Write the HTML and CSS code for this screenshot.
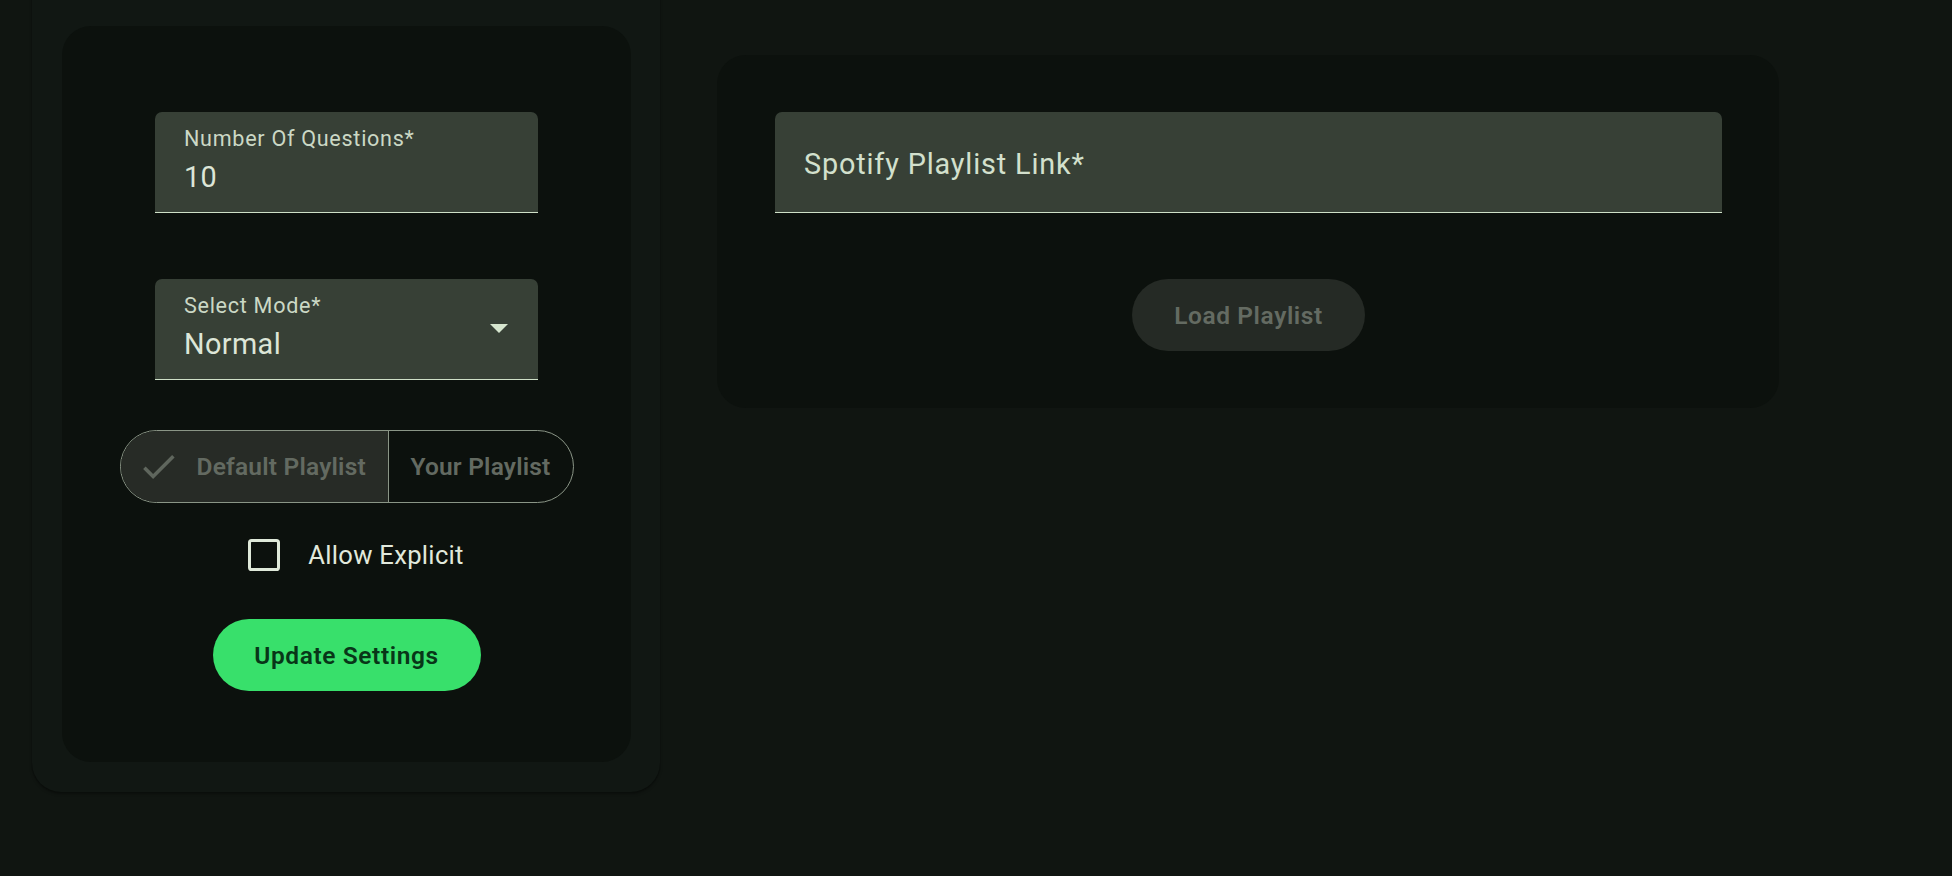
FILE: index.html
```html
<!DOCTYPE html>
<html lang="en">
<head>
<meta charset="utf-8">
<title>Quiz Settings</title>
<link rel="stylesheet" href="styles.css">
</head>
<body>
<main class="page">
  <section class="outer-paper">
    <div class="settings-card">
      <div class="field">
        <span class="field-label">Number Of Questions*</span>
        <span class="field-value">10</span>
      </div>
      <div class="field field-select">
        <div class="select-text">
          <span class="field-label">Select Mode*</span>
          <span class="field-value">Normal</span>
        </div>
        <svg class="select-arrow" viewBox="7 10 10 5" width="18" height="9" aria-hidden="true"><path d="M7 10l5 5 5-5z"/></svg>
      </div>
      <div class="toggle-group">
        <button class="toggle toggle-selected" type="button">
          <svg class="check-icon" viewBox="0 0 24 24" width="43" height="43" aria-hidden="true"><path d="M9 16.17 4.83 12l-1.42 1.41L9 19 21 7l-1.41-1.41z"/></svg>
          <span>Default Playlist</span>
        </button>
        <button class="toggle toggle-right" type="button"><span>Your Playlist</span></button>
      </div>
      <label class="check-row">
        <span class="check-box"></span>
        <span class="check-label">Allow Explicit</span>
      </label>
      <button class="btn-primary" type="button">Update Settings</button>
    </div>
  </section>

  <section class="playlist-card">
    <div class="field field-wide">
      <span class="field-placeholder">Spotify Playlist Link*</span>
    </div>
    <button class="btn-disabled" type="button">Load Playlist</button>
  </section>
</main>
</body>
</html>
```

FILE: styles.css
```css
* { box-sizing: border-box; }

html, body {
  margin: 0;
  padding: 0;
  background: #101511;
  height: 876px;
  overflow: hidden;
}

body {
  font-family: Roboto, "Liberation Sans", Arial, sans-serif;
  color: #dde6d8;
}

.page {
  display: flex;
  align-items: flex-start;
  gap: 57px;
  padding-left: 32px;
}

.outer-paper {
  width: 628px;
  margin-top: -40px;
  padding: 66px 29px 30px 30px;
  background: #111713;
  border-radius: 29px;
  box-shadow: 0 2px 3px rgba(0, 0, 0, 0.35), 0 0 1px rgba(0, 0, 0, 0.4);
}

.settings-card {
  background: #0c110d;
  border-radius: 29px;
  padding: 86px 93px 71px;
  display: flex;
  flex-direction: column;
  align-items: center;
}

.field {
  width: 383px;
  height: 101px;
  background: #374036;
  border-radius: 7px 7px 0 0;
  border-bottom: 1.6px solid #cfe0c8;
  padding: 15px 29px 0;
  display: flex;
  flex-direction: column;
}

.field-label {
  font-size: 21.6px;
  line-height: 24px;
  letter-spacing: 0.7px;
  color: #cbd8c5;
  margin-bottom: 10px;
}

.field-value {
  font-size: 28.8px;
  line-height: 32px;
  letter-spacing: 0.4px;
  color: #dde6d8;
}

.field-select {
  margin-top: 66px;
  flex-direction: row;
  align-items: flex-start;
  justify-content: space-between;
  padding-right: 30px;
}

.select-text {
  display: flex;
  flex-direction: column;
}

.select-arrow {
  fill: #d6e6cf;
  margin-top: 30px;
}

.toggle-group {
  margin-top: 50px;
  display: flex;
  height: 73px;
  border: 1px solid #8a9586;
  border-radius: 37px;
  overflow: hidden;
}

.toggle {
  display: flex;
  align-items: center;
  justify-content: center;
  border: none;
  margin: 0;
  background: transparent;
  font-family: Roboto, "Liberation Sans", Arial, sans-serif;
  font-size: 24.5px;
  font-weight: 600;
  letter-spacing: 0.2px;
  color: #636a61;
  height: 100%;
  white-space: nowrap;
  cursor: pointer;
}

.toggle-selected {
  width: 267px;
  background: #272b26;
  padding: 0 22px 0 16px;
  justify-content: flex-start;
}

.check-icon {
  fill: #5f665d;
  margin-right: 17px;
  flex: none;
}

.toggle-right {
  width: 185px;
  border-left: 1px solid #8a9586;
  padding: 0;
}

.check-row {
  margin-top: 36px;
  height: 32px;
  display: flex;
  align-items: center;
  gap: 28px;
  padding-left: 19px;
}

.check-box {
  width: 32px;
  height: 32px;
  border: 3.6px solid #dfe9d9;
  border-radius: 3.6px;
  flex: none;
}

.check-label {
  font-size: 25.6px;
  line-height: 32px;
  letter-spacing: 0.3px;
  color: #e1e9dc;
  white-space: nowrap;
}

.btn-primary {
  margin-top: 48px;
  height: 72px;
  width: 268px;
  border: none;
  border-radius: 36px;
  background: #38e06b;
  color: #083618;
  font-family: Roboto, "Liberation Sans", Arial, sans-serif;
  font-size: 24.5px;
  font-weight: 600;
  letter-spacing: 0.6px;
  white-space: nowrap;
  cursor: pointer;
}

.playlist-card {
  width: 1062px;
  margin-top: 55px;
  height: 353px;
  background: #0c110d;
  border-radius: 29px;
  padding: 57px 57px 57px 58px;
  display: flex;
  flex-direction: column;
  align-items: center;
}

.field-wide {
  width: 947px;
  padding-top: 36px;
}

.field-placeholder {
  font-size: 28.8px;
  line-height: 32px;
  letter-spacing: 0.85px;
  color: #d3e0cd;
}

.btn-disabled {
  margin-top: 66px;
  height: 72px;
  width: 233px;
  border: none;
  border-radius: 36px;
  background: #252a25;
  color: #646b62;
  font-family: Roboto, "Liberation Sans", Arial, sans-serif;
  font-size: 24.5px;
  font-weight: 600;
  letter-spacing: 0.6px;
  white-space: nowrap;
}
```
